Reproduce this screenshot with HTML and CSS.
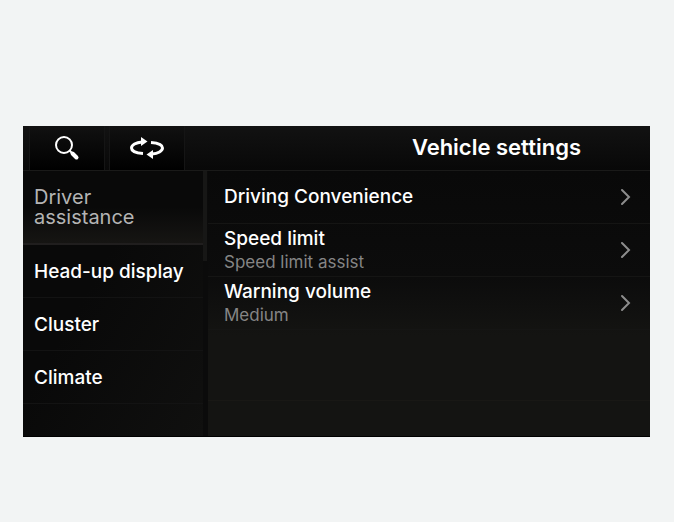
FILE: index.html
```html
<!DOCTYPE html>
<html lang="en">
<head>
  <meta charset="UTF-8" />
  <meta name="viewport" content="width=device-width, initial-scale=1.0" />
  <title>Vehicle settings</title>
  <link rel="stylesheet" href="styles.css">
</head>
<body>

  <div class="screen">
    <!-- Top bar -->
    <header class="topbar">
      <button class="tool" type="button" aria-label="Search">
        <svg width="26" height="26" viewBox="0 0 26 26" fill="none" stroke="#fff">
          <circle cx="10" cy="10" r="8" stroke-width="2" />
          <path d="M15.500 15.500l2.500 2.500" stroke-width="2" />
          <path d="M18.500 18.500l4 4" stroke-width="4" stroke-linecap="round" />
        </svg>
      </button>
      <button class="tool" type="button" aria-label="Switch">
        <svg width="36" height="22" viewBox="0 0 36 22" fill="none" stroke="#fff" stroke-width="3">
          <path d="M14 16.500C6 16 2.500 13.500 2.500 11C2.500 8 7 5.500 13 5" />
          <path d="M22 5.500C30 6 33.500 8.500 33.500 11C33.500 14 29 16.500 23 17" />
          <path d="M12 0l6.500 4.500L12 9z" fill="#fff" stroke="none" />
          <path d="M24 13l-6.500 4.500L24 22z" fill="#fff" stroke="none" />
        </svg>
      </button>
      <h1>Vehicle settings</h1>
    </header>

    <div class="panels">
      <!-- Categories -->
      <nav class="sidebar">
        <a class="category active" href="#driver">Driver<br>assistance</a>
        <a class="category" href="#hud">Head-up display</a>
        <a class="category" href="#cluster">Cluster</a>
        <a class="category" href="#climate">Climate</a>
      </nav>
      <div class="scroll"></div>

      <!-- Settings of the open category -->
      <main class="settings">
        <a class="setting" href="#convenience">
          <span class="label">Driving Convenience</span>
          <svg class="chevron" width="12" height="18" viewBox="0 0 12 18"><path d="M2 2l7 7l-7 7" /></svg>
        </a>
        <a class="setting" href="#speed">
          <span class="label">Speed limit<small>Speed limit assist</small></span>
          <svg class="chevron" width="12" height="18" viewBox="0 0 12 18"><path d="M2 2l7 7l-7 7" /></svg>
        </a>
        <a class="setting" href="#volume">
          <span class="label">Warning volume<small>Medium</small></span>
          <svg class="chevron" width="12" height="18" viewBox="0 0 12 18"><path d="M2 2l7 7l-7 7" /></svg>
        </a>
        <div class="blank"></div>
      </main>
    </div>
  </div>

</body>
</html>
```
FILE: styles.css
```css
* {
  box-sizing: border-box;
}

body {
  margin: 0;
  padding: 126px 24px 86px 23px;
  background-color: #f2f4f4;
  color: #fff;
  font-family: Inter, Roboto, sans-serif;
  font-size: 19px;
  font-weight: 500;
}

a {
  color: inherit;
  text-decoration: none;
}

.screen {
  background-color: #0b0b0b;
  border-bottom: 1px solid #000;
}

.topbar {
  display: flex;
  gap: 4px;
  height: 45px;
  padding: 0 69px 0 6px;
  background: linear-gradient(#121212, #080808);
  border-bottom: 1px solid #1a1a19;
}

.tool {
  display: flex;
  align-items: center;
  justify-content: center;
  width: 76px;
  padding: 0;
  border: solid #151515;
  border-width: 0 1px;
  background: linear-gradient(#111, #000);
  cursor: pointer;
}

.topbar h1 {
  flex: 1;
  margin: 0;
  font-size: 22px;
  font-weight: 600;
  line-height: 43px;
  text-align: right;
}

.panels {
  display: flex;
  min-height: 265px;
}

.sidebar {
  width: 180px;
  background: linear-gradient(120deg, #090909 40%, #10100f);
}

.category {
  display: flex;
  align-items: center;
  height: 53px;
  padding-left: 11px;
  border-bottom: 1px solid #131313;
  white-space: nowrap;
}

.category.active {
  height: 74px;
  border-bottom: 2px solid #201e1e;
  background: linear-gradient(#090909 50%, #161513);
  color: #b4b4b4;
  font-size: 20px;
  font-weight: 400;
  line-height: 20px;
}

.scroll {
  width: 4px;
  height: 90px;
  background-color: #171716;
}

.settings {
  flex: 1;
  margin-left: 1px;
  background: linear-gradient(#090909, #0c0c0c 40%, #141412 62%);
}

.setting {
  display: flex;
  align-items: center;
  justify-content: space-between;
  height: 53px;
  padding: 0 18px 0 16px;
  border-bottom: 1px solid #151514;
}

.label {
  line-height: 24px;
}

.label small {
  display: block;
  color: #858585;
  font-size: 17px;
  font-weight: 400;
  line-height: 22px;
}

.chevron {
  fill: none;
  stroke: #8d8d8d;
  stroke-width: 2;
  stroke-linecap: round;
}

.blank {
  height: 71px;
  border-bottom: 1px solid #191815;
}
```
